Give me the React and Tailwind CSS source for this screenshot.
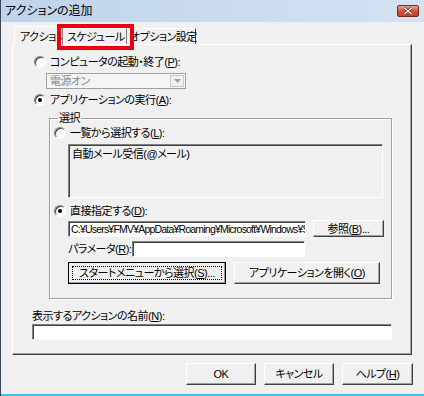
import React from 'react';

const font = "font-['Liberation_Sans','Noto_Sans_CJK_JP',sans-serif] [font-feature-settings:'palt']";

function Radio({ checked }) {
  return (
    <span className="inline-flex w-[12px] h-[12px] shrink-0 rounded-full border border-t-[#808080] border-l-[#808080] border-b-white border-r-white bg-white items-center justify-center shadow-[inset_1px_1px_0_#404040]">
      {checked && <span className="w-[4px] h-[4px] rounded-full bg-black" />}
    </span>
  );
}

function Sunken({ className = '', children }) {
  return (
    <div className={`border border-t-[#808080] border-l-[#808080] border-b-white border-r-white shadow-[inset_1px_1px_0_#404040] ${className}`}>
      {children}
    </div>
  );
}

function Btn({ className = '', focus = false, children }) {
  return (
    <div className={`flex items-center justify-center border ${focus ? 'border-black' : 'border-t-white border-l-white border-b-[#404040] border-r-[#404040]'} bg-[#f0f0f0] shadow-[inset_-1px_-1px_0_#a0a0a0] ${className}`}>
      {focus ? (
        <div className="flex items-center justify-center w-[calc(100%-8px)] h-[calc(100%-8px)] outline outline-1 outline-dotted outline-black">{children}</div>
      ) : children}
    </div>
  );
}

export default function App() {
  return (
    <div className={`w-[424px] h-[396px] flex flex-col bg-[#f0f0f0] text-[11px] leading-[14px] tracking-[-0.5px] text-black whitespace-nowrap border-l border-l-[#3b4654] ${font}`}>
      {/* Title bar */}
      <div className="h-[22px] flex items-center justify-between pl-[4px] pr-[5px] bg-gradient-to-r from-[#bfd3ea] to-[#d4e2f1]">
        <span className="text-[12px] tracking-normal">アクションの追加</span>
        <div className="w-[22px] h-[12px] rounded-[2px] border border-[#7a2c1c] bg-gradient-to-b from-[#e6a18f] via-[#d0533b] to-[#c4402b] flex items-center justify-center">
          <svg width="10" height="8" viewBox="0 0 10 8">
            <path d="M1.5 1 L8.5 7 M8.5 1 L1.5 7" stroke="#5a1a10" strokeWidth="2.6" />
            <path d="M1.5 1 L8.5 7 M8.5 1 L1.5 7" stroke="#fff" strokeWidth="1.5" />
          </svg>
        </div>
      </div>

      <div className="flex-1 flex flex-col pl-[11px] pr-[11px]">
        {/* Tabs */}
        <div className="relative flex items-end h-[22px] pl-[2px]">
          <div className="h-[19px] w-[49px] flex items-start pt-[3px] pl-[5px] border-t border-l border-t-white border-l-white border-r border-r-[#808080] bg-[#f0f0f0] z-10 -mb-px overflow-hidden">アクション</div>
          <div className="h-[16px] w-[64px] flex items-start pt-[1px] pl-[4px] border-t border-t-white border-r border-r-[#808080]">スケジュール</div>
          <div className="h-[16px] w-[69px] flex items-start pt-[1px] pl-[3px] border-t border-t-white border-r border-r-[#404040]">オプション設定</div>
          <div className="absolute left-[45px] top-[2px] w-[77px] h-[26px] border-[4px] border-[#e60012] z-20" />
        </div>

        {/* Tab panel */}
        <div className="w-[400px] h-[311px] flex flex-col border border-t-white border-l-white border-b-[#404040] border-r-[#404040] shadow-[inset_-1px_-1px_0_#a0a0a0]">
          <div className="flex items-center gap-[4px] ml-[21px] mt-[10px] h-[14px]">
            <Radio />
            <span>コンピュータの起動・終了(<u>P</u>):</span>
          </div>
          <div className="ml-[33px] mt-[4px] w-[140px] h-[16px] flex items-center border border-[#a0a0a0] bg-[#f4f4f4]">
            <span className="flex-1 pl-[3px] text-[#8a8a8a]">電源オン</span>
            <div className="w-[14px] h-[12px] mr-[1px] flex items-center justify-center border border-[#c8c8c8] bg-[#f0f0f0]">
              <svg width="7" height="4" viewBox="0 0 7 4"><path d="M0 0 H7 L3.5 4 Z" fill="#a0a0a0" /></svg>
            </div>
          </div>
          <div className="flex items-center gap-[4px] ml-[21px] mt-[4px] h-[14px]">
            <Radio checked />
            <span>アプリケーションの実行(<u>A</u>):</span>
          </div>

          {/* 選択 group */}
          <fieldset className="ml-[36px] mt-[4px] w-[343px] border border-[#a0a0a0] shadow-[inset_1px_1px_0_#fff,1px_1px_0_#fff] pl-[4px] pb-[14px]">
            <legend className="ml-[4px] px-[1px] h-[14px]">選択</legend>
            <div className="flex items-center gap-[4px] mt-[1px] h-[14px]">
              <Radio />
              <span>一覧から選択する(<u>L</u>):</span>
            </div>
            <Sunken className="ml-[14px] mt-[4px] w-[315px] h-[54px] pl-[3px] pt-[2px]">
              自動メール受信(@メール)
            </Sunken>
            <div className="flex items-center gap-[4px] mt-[6px] h-[14px]">
              <Radio checked />
              <span>直接指定する(<u>D</u>):</span>
            </div>
            <div className="flex items-center ml-[14px] mt-[2px] gap-[7px]">
              <Sunken className="w-[238px] h-[16px] bg-white pl-[2px] overflow-hidden text-[10.5px] leading-[14px] tracking-[-0.8px]">
                C:¥Users¥FMV¥AppData¥Roaming¥Microsoft¥Windows¥Start
              </Sunken>
              <Btn className="w-[71px] h-[17px]">参照(<u>B</u>)...</Btn>
            </div>
            <div className="flex items-center ml-[14px] mt-[4px]">
              <span className="w-[64px] shrink-0">パラメータ(<u>R</u>):</span>
              <Sunken className="w-[173px] h-[16px] bg-white" />
            </div>
            <div className="flex items-center ml-[14px] mt-[5px] gap-[8px]">
              <Btn focus className="w-[158px] h-[22px]">スタートメニューから選択(<u>S</u>)...</Btn>
              <Btn className="w-[146px] h-[22px]">アプリケーションを開く(<u>O</u>)</Btn>
            </div>
          </fieldset>

          <div className="ml-[19px] mt-[10px] h-[14px]">表示するアクションの名前(<u>N</u>):</div>
          <Sunken className="ml-[19px] mt-[1px] w-[360px] h-[16px] bg-white" />
        </div>

        {/* Dialog buttons */}
        <div className="flex justify-end gap-[8px] mt-[8px]">
          <Btn className="w-[70px] h-[22px]">OK</Btn>
          <Btn className="w-[70px] h-[22px]">キャンセル</Btn>
          <Btn className="w-[71px] h-[22px]">ヘルプ(<u>H</u>)</Btn>
        </div>
      </div>
      <div className="h-[2px] bg-[#3cc3e6]" />
    </div>
  );
}
